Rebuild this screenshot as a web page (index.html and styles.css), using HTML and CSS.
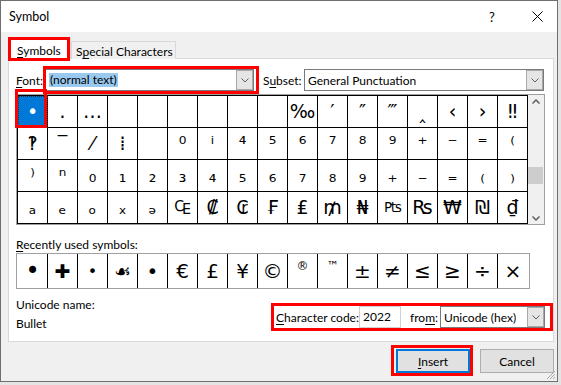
FILE: index.html
```html
<!DOCTYPE html>
<html lang="en">
<head>
    <meta charset="UTF-8">
    <title>Symbol</title>
    <link rel="stylesheet" href="styles.css">
</head>
<body>

    <div class="dialog">
        <div class="titlebar">
            <span class="title">Symbol</span>
            <span class="help">?</span>
            <span class="close">
                <svg width="11" height="11" viewBox="0 0 11 11"><path d="M0.5 0.5 L10.5 10.5 M10.5 0.5 L0.5 10.5" stroke="#000" stroke-width="1" fill="none"/></svg>
            </span>
        </div>

        <div class="body">
            <div class="tabs">
                <div class="tab active mark"><u>S</u>ymbols</div>
                <div class="tab">S<u>p</u>ecial Characters</div>
            </div>

            <div class="panel">
                <div class="font-row">
                    <span class="lbl font-lbl"><u>F</u>ont:</span>
                    <div class="combo font-combo mark">
                        <span class="sel">(normal text)</span>
                        <span class="drop boxed"><svg width="8" height="5" viewBox="0 0 8 5"><polyline points="0.5,0.5 4,4 7.5,0.5" fill="none" stroke="#606060"/></svg></span>
                    </div>
                    <span class="lbl subset-lbl">S<u>u</u>bset:</span>
                    <div class="combo subset-combo">
                        <span>General Punctuation</span>
                        <span class="drop boxed"><svg width="8" height="5" viewBox="0 0 8 5"><polyline points="0.5,0.5 4,4 7.5,0.5" fill="none" stroke="#606060"/></svg></span>
                    </div>
                </div>

                <div class="chart">
                    <div class="grid">
                        <div class="cell selected mark">•</div><div class="cell">․</div><div class="cell">…</div><div class="cell"></div><div class="cell"></div><div class="cell"></div><div class="cell"></div><div class="cell"></div><div class="cell"></div><div class="cell">‰</div><div class="cell">′</div><div class="cell">″</div><div class="cell">‴</div><div class="cell">‸</div><div class="cell">‹</div><div class="cell">›</div><div class="cell">‼</div>
                        <div class="cell">‽</div><div class="cell">‾</div><div class="cell">⁄</div><div class="cell">⁞</div><div class="cell"></div><div class="cell">⁰</div><div class="cell">ⁱ</div><div class="cell">⁴</div><div class="cell">⁵</div><div class="cell">⁶</div><div class="cell">⁷</div><div class="cell">⁸</div><div class="cell">⁹</div><div class="cell">⁺</div><div class="cell">⁻</div><div class="cell">⁼</div><div class="cell">⁽</div>
                        <div class="cell">⁾</div><div class="cell">ⁿ</div><div class="cell">₀</div><div class="cell">₁</div><div class="cell">₂</div><div class="cell">₃</div><div class="cell">₄</div><div class="cell">₅</div><div class="cell">₆</div><div class="cell">₇</div><div class="cell">₈</div><div class="cell">₉</div><div class="cell">₊</div><div class="cell">₋</div><div class="cell">₌</div><div class="cell">₍</div><div class="cell">₎</div>
                        <div class="cell">ₐ</div><div class="cell">ₑ</div><div class="cell">ₒ</div><div class="cell">ₓ</div><div class="cell">ₔ</div><div class="cell">₠</div><div class="cell">₡</div><div class="cell">₢</div><div class="cell">₣</div><div class="cell">₤</div><div class="cell">₥</div><div class="cell">₦</div><div class="cell narrow">₧</div><div class="cell">₨</div><div class="cell">₩</div><div class="cell">₪</div><div class="cell">₫</div>
                    </div>
                    <div class="scrollbar">
                        <span class="arrow"><svg width="8" height="5" viewBox="0 0 8 5"><polyline points="0.5,4.5 4,1 7.5,4.5" fill="none" stroke="#606060" stroke-width="1.5"/></svg></span>
                        <div class="track"><div class="thumb"></div></div>
                        <span class="arrow"><svg width="8" height="5" viewBox="0 0 8 5"><polyline points="0.5,0.5 4,4 7.5,0.5" fill="none" stroke="#606060" stroke-width="1.5"/></svg></span>
                    </div>
                </div>

                <div class="recent-lbl"><u>R</u>ecently used symbols:</div>
                <div class="recent">
                    <div class="rcell big">•</div>
                    <div class="rcell heavy">✚</div>
                    <div class="rcell small">•</div>
                    <div class="rcell orn">☙</div>
                    <div class="rcell">•</div>
                    <div class="rcell">€</div>
                    <div class="rcell">£</div>
                    <div class="rcell">¥</div>
                    <div class="rcell">©</div>
                    <div class="rcell sup">®</div>
                    <div class="rcell sup">™</div>
                    <div class="rcell">±</div>
                    <div class="rcell">≠</div>
                    <div class="rcell">≤</div>
                    <div class="rcell">≥</div>
                    <div class="rcell">÷</div>
                    <div class="rcell">×</div>
                </div>

                <div class="info-row">
                    <div class="uname">
                        <div>Unicode name:</div>
                        <div class="uname-value">Bullet</div>
                    </div>
                    <div class="code-row">
                        <span class="lbl code-lbl"><u>C</u>haracter code:</span>
                        <div class="input">2022</div>
                        <span class="lbl from-lbl">fro<u>m</u>:</span>
                        <div class="combo from-combo">
                            <span>Unicode (hex)</span>
                            <span class="drop boxed"><svg width="8" height="5" viewBox="0 0 8 5"><polyline points="0.5,0.5 4,4 7.5,0.5" fill="none" stroke="#606060"/></svg></span>
                        </div>
                    </div>
                </div>
            </div>

            <div class="buttons">
                <button class="btn default mark"><u>I</u>nsert</button>
                <button class="btn">Cancel</button>
            </div>
        </div>

        <svg class="grip" width="10" height="10" viewBox="0 0 10 10">
            <path d="M9 1 L1 9 M9 4 L4 9 M9 7 L7 9" stroke="#a8a8a8" stroke-width="1" fill="none"/>
        </svg>
    </div>

</body>
</html>
```

FILE: styles.css
```css
* {
    box-sizing: border-box;
}

html, body {
    margin: 0;
}

body {
    width: 561px;
    height: 385px;
    overflow: hidden;
    background: #e4e4e4;
    font-family: 'Lato', 'DejaVu Sans', sans-serif;
    font-size: 12px;
    color: #000;
    white-space: nowrap;
}

u {
    text-decoration-thickness: 1px;
    text-underline-offset: 2px;
}

.dialog {
    position: relative;
    width: 558px;
    height: 382px;
    border: 1px solid #6f6f6f;
    background: #f0f0f0;
    display: flex;
    flex-direction: column;
}

/* title bar */
.titlebar {
    height: 31px;
    flex-shrink: 0;
    background: #fff;
    display: flex;
    align-items: center;
    padding-left: 8px;
}

.title {
    font-size: 12.5px;
}

.help {
    margin-left: auto;
    width: 20px;
    text-align: center;
    font-size: 13px;
}

.close {
    width: 22px;
    margin-left: 24px;
    margin-right: 9px;
    display: flex;
    justify-content: center;
}

.body {
    flex: 1;
    padding: 6px 3px 0 7px;
}

/* tabs */
.tabs {
    position: relative;
    z-index: 1;
    display: flex;
    align-items: flex-end;
    height: 21px;
}

.tab {
    width: 105px;
    height: 18px;
    padding: 2px 0 0 4px;
    line-height: 16px;
    border: 1px solid #d9d9d9;
    border-bottom: none;
    background: #f0f0f0;
}

.tab.active {
    width: 62px;
    height: 21px;
    margin-left: 1px;
    padding: 4px 0 0 7px;
    background: #fff;
}

.panel {
    margin-top: -1px;
    height: 284px;
    border: 1px solid #d9d9d9;
    background: #fff;
    padding: 10px 8px 0 7px;
}

/* font / subset */
.font-row {
    display: flex;
    align-items: center;
    height: 22px;
}

.font-lbl {
    width: 29px;
}

.subset-lbl {
    width: 41px;
    margin-left: 9px;
}

.combo {
    display: flex;
    align-items: center;
    height: 22px;
    border: 1px solid #7a7a7a;
    background: #fff;
    padding-left: 3px;
}

.font-combo {
    width: 209px;
}

.subset-combo {
    width: 240px;
}

.sel {
    background: #99c9ef;
    line-height: 14px;
    padding: 0 1px;
}

.drop {
    margin-left: auto;
    width: 17px;
    height: 20px;
    display: flex;
    align-items: center;
    justify-content: center;
    background: #e5e5e5;
    border: 1px solid #a9a9a9;
}

/* symbol chart */
.chart {
    display: flex;
    width: 529px;
    height: 131px;
    margin-top: 3px;
    border: 1px solid #a0a0a0;
}

.grid {
    display: grid;
    grid-template-columns: repeat(17, 30px);
    grid-auto-rows: 32px;
    width: 511px;
    border-left: 1px solid #000;
    border-top: 1px solid #000;
    font-family: 'DejaVu Sans', sans-serif;
    font-size: 19px;
}

.cell {
    border-right: 1px solid #000;
    border-bottom: 1px solid #000;
    text-align: center;
    line-height: 31px;
}

.cell.narrow {
    font-size: 14px;
    letter-spacing: -1px;
}

.cell.selected {
    background: #0078d7;
    color: #fff;
    outline: 1px dotted #333;
    outline-offset: -1px;
}

.scrollbar {
    width: 16px;
    background: #f0f0f0;
    display: flex;
    flex-direction: column;
}

.arrow {
    height: 12px;
    display: flex;
    align-items: center;
    justify-content: center;
}

.track {
    flex: 1;
}

.thumb {
    width: 15px;
    height: 17px;
    margin-top: 60px;
    background: #cdcdcd;
}

/* recently used */
.recent-lbl {
    margin-top: 12px;
    line-height: 16px;
}

.recent {
    display: flex;
    width: 514px;
    height: 36px;
    padding-left: 1px;
    border: 1px solid #a0a0a0;
    font-family: 'DejaVu Sans', sans-serif;
    font-size: 20px;
}

.rcell {
    width: 30px;
    flex-shrink: 0;
    border-right: 1px solid #000;
    display: flex;
    align-items: center;
    justify-content: center;
}

.rcell:last-child {
    border-right: none;
}

.rcell.big {
    font-size: 24px;
}

.rcell.small {
    font-size: 16px;
}

.rcell.heavy {
    font-size: 19px;
}

.rcell.orn {
    font-size: 19px;
}

.rcell.sup {
    align-items: flex-start;
    padding-top: 5px;
    font-size: 12px;
}

/* bottom info */
.info-row {
    display: flex;
    justify-content: space-between;
    margin-top: 8px;
    margin-right: -5px;
}

.uname div {
    line-height: 16px;
}

.uname .uname-value {
    margin-top: 3px;
}

.code-row {
    display: flex;
    align-items: center;
    height: 22px;
    margin-top: 9px;
    padding: 0 5px 0 2px;
    outline: 3px solid #f00;
}

.code-lbl {
    width: 83px;
}

.input {
    width: 42px;
    height: 22px;
    border: 1px solid #d0d0d0;
    padding: 2px 0 0 3px;
    line-height: 16px;
}

.from-lbl {
    width: 30px;
    margin-left: 9px;
}

.from-combo {
    width: 105px;
}

/* buttons */
.buttons {
    display: flex;
    justify-content: flex-end;
    gap: 10px;
    margin-top: 7px;
}

.btn {
    width: 74px;
    height: 24px;
    padding: 0;
    border: 1px solid #adadad;
    background: #e1e1e1;
    font: inherit;
    color: #000;
}

.btn.default {
    border-color: #0078d7;
    box-shadow: inset 0 0 0 1px #0078d7;
}

.grip {
    position: absolute;
    right: 1px;
    bottom: 1px;
}

/* red annotation boxes */
.mark {
    position: relative;
}

.mark::after {
    content: "";
    position: absolute;
    z-index: 5;
    border: 3px solid #f00;
    pointer-events: none;
}

.tab.mark::after {
    top: -2px;
    left: -2px;
    right: 0;
    bottom: -2px;
}

.font-combo.mark::after {
    top: -4px;
    left: -3px;
    right: -6px;
    bottom: -4px;
}

.cell.mark::after {
    top: -7px;
    left: -3px;
    right: 0;
    bottom: -1px;
}

.btn.mark::after {
    top: -5px;
    left: -6px;
    right: -4px;
    bottom: -4px;
}
```
